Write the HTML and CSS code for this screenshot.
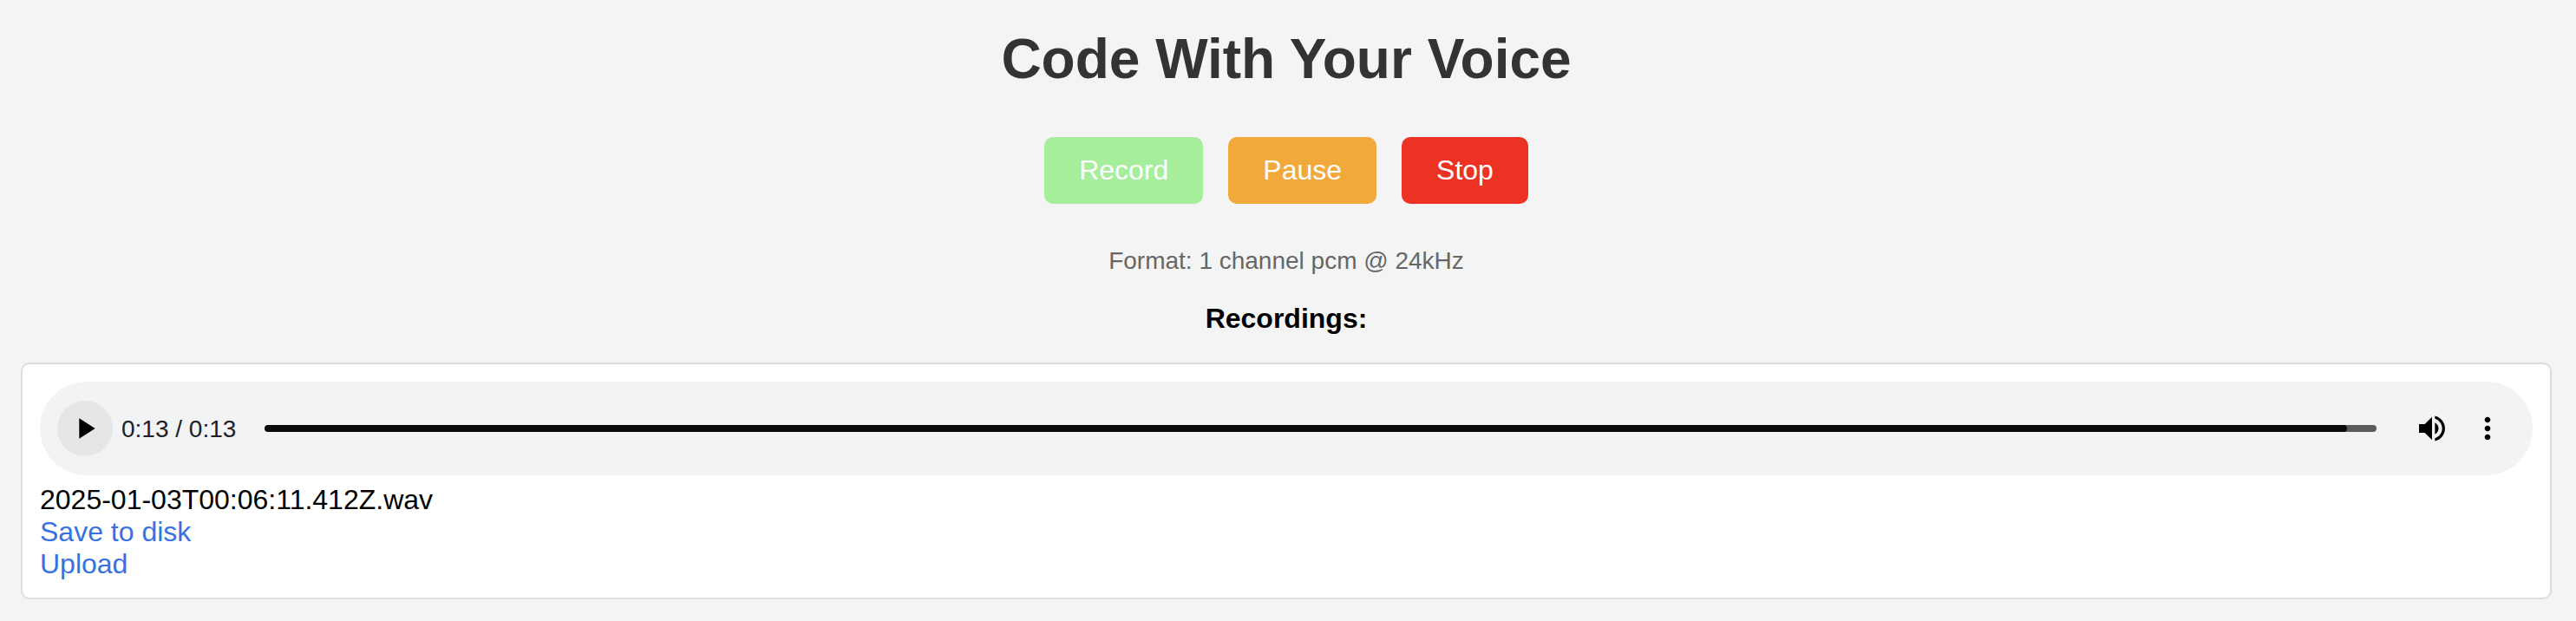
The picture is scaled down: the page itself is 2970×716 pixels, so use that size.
FILE: index.html
```html
<!DOCTYPE html>
<html lang="en">
<head>
<meta charset="utf-8">
<title>Code With Your Voice</title>
<link rel="stylesheet" href="styles.css">
</head>
<body>
<h1 class="title">Code With Your Voice</h1>
<div class="controls">
<button class="btn record">Record</button>
<button class="btn pause">Pause</button>
<button class="btn stop">Stop</button>
</div>
<p class="format">Format: 1 channel pcm @ 24kHz</p>
<p class="heading">Recordings:</p>
<ol class="recordings">
<li class="item">
<div class="player">
<span class="play"><svg width="40" height="40" viewBox="0 0 24 24"><path d="M8 5v14l11-7z"/></svg></span>
<span class="time">0:13 / 0:13</span>
<span class="track"><span class="played"></span></span>
<svg class="volume" width="40" height="40" viewBox="0 0 24 24"><path d="M3 9v6h4l5 5V4L7 9H3zm13.500 3c0-1.770-1.020-3.290-2.500-4.030v8.050c1.480-.73 2.500-2.250 2.500-4.020zM14 3.230v2.060c2.890.86 5 3.540 5 6.710s-2.110 5.850-5 6.710v2.060c4.010-.91 7-4.490 7-8.770s-2.990-7.860-7-8.770z"/></svg>
<svg class="more" width="40" height="40" viewBox="0 0 24 24"><path d="M12 8c1.100 0 2-.9 2-2s-.9-2-2-2-2 .9-2 2 .9 2 2 2zm0 2c-1.100 0-2 .9-2 2s.9 2 2 2 2-.9 2-2-.9-2-2-2zm0 6c-1.100 0-2 .9-2 2s.9 2 2 2 2-.9 2-2-.9-2-2-2z"/></svg>
</div>
<div class="filename">2025-01-03T00:06:11.412Z.wav</div>
<a class="link">Save to disk</a>
<a class="link">Upload</a>
</li>
</ol>
</body>
</html>
```
FILE: styles.css
```css
* { box-sizing: border-box; }
body { margin: 0; height: 716px; overflow: hidden; background: #f4f4f4; font: 32px/37px "Liberation Sans", Arial, sans-serif; color: #000; }
.title { margin: 0; padding: 31px 4px 0 0; font-size: 64px; line-height: 74px; text-align: center; color: #333; }
.controls { display: flex; justify-content: center; gap: 29px; margin-top: 53px; padding-right: 4px; }
.btn { height: 77px; padding: 0 40px; border: 0; border-radius: 10px; color: #fff; font: 32px/37px "Liberation Sans", Arial, sans-serif; }
.record { background: #a6ee9b; }
.pause { background: #f2a93b; }
.stop { background: #eb3223; }
.format { margin: 48px 0 0; font-size: 28px; line-height: 36px; text-align: center; color: #666; padding-right: 4px; }
.heading { margin: 30px 0 0; font-weight: bold; text-align: center; padding-right: 4px; }
.recordings { list-style: none; margin: 32px 28px 0 24px; padding: 0; }
.item { height: 273px; padding: 20px; background: #fff; border: 2px solid #ddd; border-radius: 10px; }
.player { display: flex; align-items: center; height: 108px; padding: 0 32px 0 20px; border-radius: 54px; background: #f1f3f4; margin-bottom: 10px; }
.play { display: flex; align-items: center; justify-content: center; width: 64px; height: 64px; border-radius: 50%; background: #e5e6e8; }
.time { margin-left: 10px; width: 165px; font-size: 28px; white-space: nowrap; color: #202124; }
.track { flex: 1; height: 8px; border-radius: 4px; background: #5b5c5c; overflow: hidden; }
.played { display: block; width: 98.6%; height: 8px; border-radius: 4px; background: #0a0a0a; }
.volume { margin-left: 44px; }
.more { margin-left: 24px; }
.link { display: block; color: #3871e0; }
```
